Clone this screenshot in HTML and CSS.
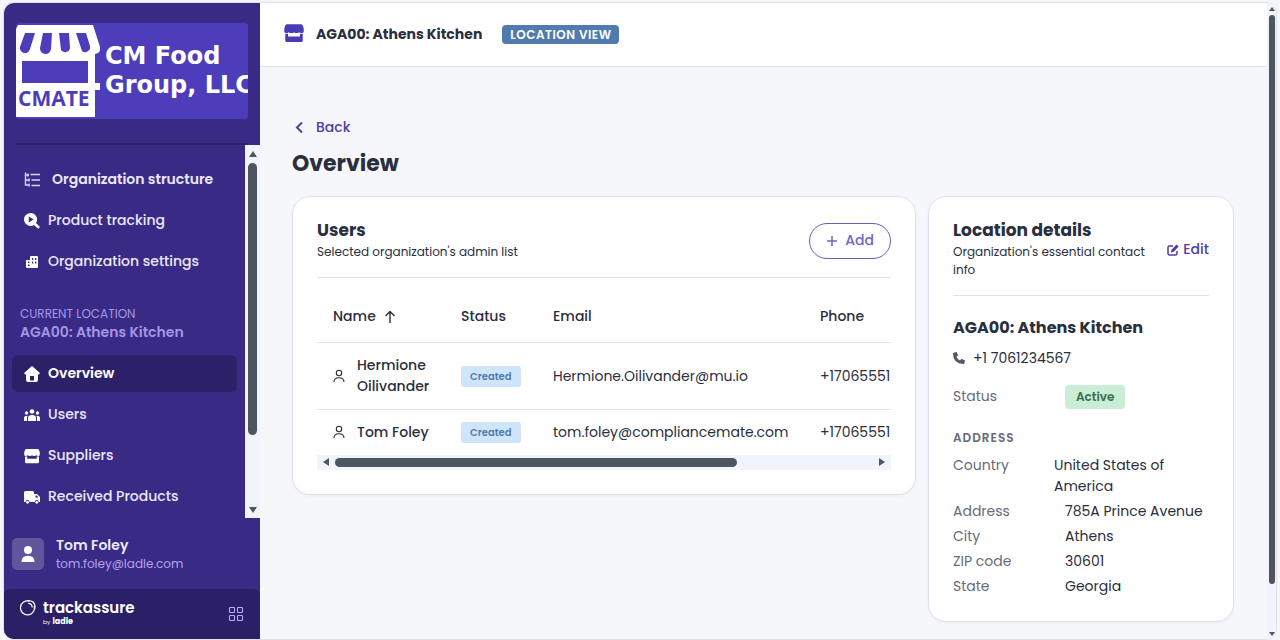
FILE: index.html
```html
<!DOCTYPE html>
<html lang="en">
<head>
<meta charset="utf-8">
<meta name="viewport" content="width=device-width, initial-scale=1">
<title>Overview</title>
<link rel="stylesheet" href="styles.css">
</head>
<body>
<div class="app">
  <aside class="sidebar">
    <div class="brand">
      <svg class="brand-logo" viewBox="0 0 232 96" role="img" aria-label="CM Food Group, LLC">
        <rect width="232" height="96" fill="#4d3dba"/>
        <path fill="#fff" d="M2 2H77L84 24Q85 30 79 31V60H84V67H79V94H0V6Z"/>
        <path fill="#4d3dba" d="M9 10H19L14 26A5 5 0 0 1 4 24ZM27 10H36L35 26A5 5 0 0 1 24 25ZM43 10H53L54 25A5 5 0 0 1 45 27ZM60 10H70L74 23A5 5 0 0 1 66 28ZM6 38H72V60H6Z"/>
        <text class="logo-mark" x="2" y="83">CMATE</text>
        <text class="logo-name" x="89" y="41">CM Food</text>
        <text class="logo-name" x="89" y="70">Group, LLC</text>
      </svg>
    </div>
    <div class="side-scroll">
      <nav class="nav">
        <a class="nav-item wide" href="#"><svg class="ico" viewBox="0 0 16 16" fill="none" stroke="#d8d2fa" stroke-width="1.400"><path d="M1.500 .5V13H5.500M1.500 3H5M1.500 8H5.500M6.500 2.500H16M7.500 8H16M7.500 13.500H16"/><path d="M4 1.500V4.500M5 6.500V9.500M5 11.500V14.500"/></svg>Organization structure</a>
        <a class="nav-item" href="#"><svg class="ico" viewBox="0 0 16 16"><path fill="currentColor" fill-rule="evenodd" d="M6.500 0A6.500 6.500 0 0 1 12 10L16 14L14.200 15.800L10 12A6.500 6.500 0 1 1 6.500 0ZM4.800 3.500V9.500L9.600 6.500Z"/></svg>Product tracking</a>
        <a class="nav-item" href="#"><svg class="ico" viewBox="0 0 16 16"><path fill="currentColor" fill-rule="evenodd" d="M2 6H6V3Q6 2 7 2H13Q14 2 14 3V13Q14 14 13 14H3Q2 14 2 13ZM4 7.500V9H5.500V7.500ZM4 10.500V12H5.500V10.500ZM8 4V6H9.300V4ZM11 4V6H12.300V4ZM8 7.500V9.500H9.300V7.500ZM11 7.500V9.500H12.300V7.500Z"/></svg>Organization settings</a>
        <div class="nav-group">
          <span class="nav-label">CURRENT LOCATION</span>
          <span class="nav-place">AGA00: Athens Kitchen</span>
        </div>
        <a class="nav-item active" href="#" aria-current="page"><svg class="ico" viewBox="0 0 16 16"><path fill="currentColor" fill-rule="evenodd" d="M8 0L16 7L15 8.500H14V14Q14 16 12 16H4Q2 16 2 14V8.500H1L0 7ZM6 10V14.500H10V10Z"/></svg>Overview</a>
        <a class="nav-item" href="#"><svg class="ico" viewBox="0 0 16 16" fill="currentColor"><circle cx="8" cy="4.500" r="2.300"/><circle cx="2.500" cy="6" r="1.700"/><circle cx="13.500" cy="6" r="1.700"/><path d="M4 14V11Q4 8 8 8T12 11V14ZM0 14V11Q0 8.700 3.600 8.700Q2.800 10 3 14ZM16 14V11Q16 8.700 12.400 8.700Q13.200 10 13 14Z"/></svg>Users</a>
        <a class="nav-item" href="#"><svg class="ico" viewBox="0 0 16 16"><use href="#store"/></svg>Suppliers</a>
        <a class="nav-item" href="#"><svg class="ico" viewBox="0 0 16 16"><path fill="currentColor" d="M1.500 2H8.500Q10 2 10 3.500V5H13L16 8V13H14.800A2 2 0 0 0 10.800 13H5.500A2 2 0 0 0 1.500 13H0V3.500Q0 2 1.500 2Z"/><circle cx="3.500" cy="13.300" r="1.400" fill="currentColor"/><circle cx="12.800" cy="13.300" r="1.400" fill="currentColor"/><path d="M11.500 6.500V8.500H14.500L12.800 6.500Z" fill="#392b85"/></svg>Received Products</a>
      </nav>
      <div class="vbar side-bar"><i class="arrow up"></i><i class="thumb"></i><i class="rest"></i><i class="arrow down"></i></div>
    </div>
    <div class="account">
      <span class="avatar"><svg viewBox="0 0 16 16" width="16" height="16" fill="#fff"><circle cx="8" cy="4" r="4"/><path d="M1.500 16Q1.500 9.800 8 9.800T14.500 16Z"/></svg></span>
      <div class="account-text">
        <span class="account-name">Tom Foley</span>
        <span class="account-mail">tom.foley@ladle.com</span>
      </div>
    </div>
    <footer class="side-foot">
      <svg class="ring" viewBox="0 0 16 16" fill="none" stroke="#fff"><path d="M9.500 1.200A7 7 0 1 0 14.200 6M7.500 .7Q14.500 .4 15 6.500Q15.200 8.500 14 10M8.300 3.300Q12.200 3.300 12.200 7.500" stroke-width="1.200"/></svg>
      <div class="product"><span class="product-name">trackassure</span><span class="product-by"><small>by</small><b>ladle</b></span></div>
      <button class="grid-btn" type="button" aria-label="Apps"><svg viewBox="0 0 16 16" width="16" height="16" fill="none" stroke="#b9aef5" stroke-width="1.100"><rect x="1.500" y="1.500" width="5" height="5" rx=".8"/><rect x="9.500" y="1.500" width="5" height="5" rx=".8"/><rect x="1.500" y="9.500" width="5" height="5" rx=".8"/><rect x="9.500" y="9.500" width="5" height="5" rx=".8"/></svg></button>
    </footer>
  </aside>

  <main class="main">
    <header class="topbar">
      <svg class="store" viewBox="0 0 16 16"><g id="store" fill="currentColor"><path d="M2.500 1H13.500Q14.500 1 15 2L15.800 4.500V6.500Q15.800 8 14.300 8Q13 8 12.200 7.300Q11.500 8 10.100 8T8 7.300Q7.300 8 5.900 8T3.800 7.300Q3 8 1.700 8Q.2 8 .2 6.500V4.500L1 2Q1.500 1 2.500 1Z"/><path d="M1 8.600H3.200V10.800H12.800V8.600H15V14Q15 15.200 13.800 15.200H2.200Q1 15.200 1 14Z"/></g></svg>
      <strong class="place">AGA00: Athens Kitchen</strong>
      <span class="view-tag">LOCATION VIEW</span>
    </header>
    <div class="content">
      <a class="back" href="#"><svg viewBox="0 0 16 16" width="16" height="16" fill="none" stroke="currentColor" stroke-width="2"><path d="M10 2.500L5 7.500L10 12.500"/></svg>Back</a>
      <h1 class="page-title">Overview</h1>
      <div class="cards">
        <section class="card">
          <div class="card-head">
            <div><h2 class="card-title">Users</h2><p class="card-sub">Selected organization's admin list</p></div>
            <button class="add-btn" type="button"><svg viewBox="0 0 12 12" width="12" height="12" fill="none" stroke="currentColor" stroke-width="1.500"><path d="M6 1V11M1 6H11"/></svg>Add</button>
          </div>
          <div class="table-wrap">
            <table class="users">
              <colgroup><col class="c-name"><col class="c-status"><col class="c-mail"><col></colgroup>
              <thead><tr><th><span class="sort">Name<svg viewBox="0 0 12 14" width="12" height="14" fill="none" stroke="currentColor" stroke-width="1.400"><path d="M6 13V2M1.500 6L6 1.500L10.500 6"/></svg></span></th><th>Status</th><th>Email</th><th>Phone</th></tr></thead>
              <tbody>
                <tr class="tall"><td><span class="person"><svg viewBox="0 0 12 14" width="12" height="14" fill="none" stroke="currentColor" stroke-width="1.100"><circle cx="6" cy="4" r="2.700"/><path d="M1 13Q1 8.800 6 8.800T11 13"/></svg>Hermione Oilivander</span></td><td><span class="chip">Created</span></td><td>Hermione.Oilivander@mu.io</td><td>+17065551</td></tr>
                <tr><td><span class="person"><svg viewBox="0 0 12 14" width="12" height="14" fill="none" stroke="currentColor" stroke-width="1.100"><circle cx="6" cy="4" r="2.700"/><path d="M1 13Q1 8.800 6 8.800T11 13"/></svg>Tom Foley</span></td><td><span class="chip">Created</span></td><td>tom.foley@compliancemate.com</td><td>+17065551</td></tr>
              </tbody>
            </table>
            <div class="hbar"><i class="arrow left"></i><i class="thumb"></i><i class="rest"></i><i class="arrow right"></i></div>
          </div>
        </section>

        <section class="card">
          <div class="card-head">
            <div><h2 class="card-title">Location details</h2><p class="card-sub">Organization's essential contact info</p></div>
            <button class="edit-btn" type="button"><svg viewBox="0 0 12 12" width="12" height="12" fill="none" stroke="currentColor" stroke-width="1.500"><path d="M6 2H2.500Q1 2 1 3.500V9.500Q1 11 2.500 11H8.500Q10 11 10 9.500V7"/><path d="M4 8.500L4.500 5.700L9.500 .5L11.700 2.500L6.700 7.800Z" fill="currentColor" stroke="none"/></svg>Edit</button>
          </div>
          <h3 class="loc-name">AGA00: Athens Kitchen</h3>
          <p class="loc-phone"><svg viewBox="0 0 12 12" width="12" height="12" fill="#565866"><path d="M.7 .8L3 0Q3.600 -.1 3.900 .5L4.900 3Q5 3.500 4.600 3.900L3.500 4.900Q4.700 7.300 7.100 8.500L8.100 7.300Q8.500 6.900 9.100 7.100L11.500 8.200Q12.100 8.500 11.900 9.100L11.300 11.400Q11.100 12 10.500 12Q0 11.800 0 1.500Q.1 1 .7 .8Z"/></svg>+1 7061234567</p>
          <dl class="facts status"><div class="fact"><dt>Status</dt><dd><span class="active-chip">Active</span></dd></div></dl>
          <h4 class="facts-title">ADDRESS</h4>
          <dl class="facts">
            <div class="fact long"><dt>Country</dt><dd>United States of America</dd></div>
            <div class="fact"><dt>Address</dt><dd>785A Prince Avenue</dd></div>
            <div class="fact"><dt>City</dt><dd>Athens</dd></div>
            <div class="fact"><dt>ZIP code</dt><dd>30601</dd></div>
            <div class="fact"><dt>State</dt><dd>Georgia</dd></div>
          </dl>
        </section>
      </div>
    </div>
  </main>
  <div class="vbar page-bar"><i class="arrow up"></i><i class="thumb"></i><i class="rest"></i><i class="arrow down"></i></div>
</div>
</body>
</html>
```
FILE: styles.css
```css
* { box-sizing: border-box; }
body {
  margin: 0;
  padding: 2px 3px 0;
  height: 100vh;
  background: #f5f6f9;
  color: #2a2e3d;
  font: 14px/21px Poppins, Inter, sans-serif;
}
h1, h2, h3, h4, p, dl, dd { margin: 0; }
a { text-decoration: none; color: inherit; }
button { font: inherit; background: none; border: 0; padding: 0; cursor: pointer; }
svg { flex: none; }

.app { display: flex; height: 100%; border: 1px solid #e0e1e7; border-radius: 11px; overflow: hidden; background: #f5f7fb; }

.sidebar { width: 256px; flex: none; display: flex; flex-direction: column; background: #392b85; color: #ebe8ff; }
.brand { margin: 0 12px; padding: 20px 0 24px; border-bottom: 2px solid #2d2269; }
.brand-logo { display: block; width: 100%; border-radius: 3px; }
.logo-mark { font: bold 21px "Open Sans", sans-serif; fill: #4d3dba; }
.logo-name { font: bold 24px "DejaVu Sans", sans-serif; fill: #fff; }

.side-scroll { flex: 1; min-height: 0; display: flex; }
.nav { flex: 1; overflow: hidden; display: flex; flex-direction: column; gap: 4px; padding: 16px 8px 0; }
.nav-item { flex: none; display: flex; align-items: center; gap: 8px; height: 37px; padding: 0 12px; border-radius: 6px; font-weight: 500; white-space: nowrap; }
.nav-item.wide { gap: 12px; font-weight: 600; }
.nav-item.active { background: #2c2169; color: #fff; font-weight: 600; }
.ico { width: 16px; height: 16px; color: #fff; }
.nav-group { display: flex; flex-direction: column; padding: 20px 8px 10px; color: #a496e4; }
.nav-label { font-size: 12px; line-height: 19px; }
.nav-place { font-weight: 600; line-height: 18px; }

.account { display: flex; align-items: center; gap: 12px; height: 71px; padding: 0 8px; }
.avatar { display: grid; place-items: center; width: 32px; height: 32px; border-radius: 5px; background: #61559d; }
.account-text { display: flex; flex-direction: column; }
.account-name { font-weight: 600; line-height: 20px; }
.account-mail { font-size: 12px; line-height: 18px; color: #b0a2ee; }
.side-foot { display: flex; gap: 7px; height: 50px; padding: 11px 16px; border-radius: 6px 6px 0 0; background: #2b2068; color: #fff; }
.ring { width: 16px; height: 16px; }
.product { display: flex; flex-direction: column; flex: 1; }
.product-name { font-size: 15px; line-height: 16px; font-weight: 600; }
.product-by { display: flex; align-items: center; gap: 2px; font-size: 8px; line-height: 12px; }
.product-by small { font-size: 6px; }
.grid-btn { align-self: center; display: flex; }

.vbar { display: flex; flex-direction: column; align-items: center; background: #f1f4fb; }
.side-bar { width: 15px; padding: 6px 0 5px; gap: 6px; }
.side-bar .thumb { flex: 273; width: 9px; }
.side-bar .rest { flex: 60; }
.page-bar { width: 9px; padding: 4px 0 3px; gap: 4px; }
.page-bar .thumb { flex: 571; width: 6px; }
.page-bar .rest { flex: 40; }
.thumb { border-radius: 5px; background: #4d5562; }
.arrow { border: 0 solid transparent; }
.arrow.up { border-width: 0 4px 6px; border-bottom-color: #4d5562; }
.arrow.down { border-width: 6px 4px 0; border-top-color: #4d5562; }
.arrow.left { border-width: 4px 6px 4px 0; border-right-color: #4d5562; }
.arrow.right { border-width: 4px 0 4px 6px; border-left-color: #4d5562; }
.page-bar .arrow.up { border-width: 0 3px 4px; }
.page-bar .arrow.down { border-width: 4px 3px 0; }
.hbar { display: flex; align-items: center; height: 15px; padding: 0 6px; gap: 6px; background: #f1f4fb; }
.hbar .thumb { flex: 402; height: 9px; }
.hbar .rest { flex: 130; }

.main { flex: 1; min-width: 0; }
.topbar { display: flex; align-items: center; height: 64px; padding: 0 24px; background: #fff; border-bottom: 1px solid #dfe1e7; }
.store { width: 20px; height: 20px; color: #4b3bb5; margin: 0 12px 4px 0; }
.place { font-weight: 700; }
.view-tag { margin-left: 20px; padding: 0 8px; border-radius: 4px; background: #517baf; color: #fff; font-size: 12px; line-height: 19px; font-weight: 600; letter-spacing: 0.5px; }
.content { padding: 48px 33px 16px 32px; }
.back { display: inline-flex; align-items: center; gap: 8px; padding: 2px 0; color: #4d3da8; font-weight: 500; }
.page-title { margin: 7px 0 17px; font-size: 22px; line-height: 30px; font-weight: 700; }
.cards { display: grid; grid-template-columns: minmax(0, 1fr) 306px; gap: 12px; align-items: start; }
.card { padding: 24px; background: #fff; border: 1px solid #dfe1e8; border-radius: 18px; box-shadow: 0 1px 2px #dfe1e866; }
.card-head { display: flex; align-items: center; justify-content: space-between; gap: 16px; padding-bottom: 16px; border-bottom: 1px solid #dfe1e6; }
.card-title { font-size: 17px; line-height: 18px; font-weight: 700; }
.card-sub { margin-top: 4px; font-size: 12px; line-height: 18px; }
.add-btn { display: flex; align-items: center; gap: 7px; height: 36px; padding: 0 16px; border: 1px solid #6a5cb8; border-radius: 18px; color: #7165c5; font-weight: 500; }
.edit-btn { display: flex; align-items: center; gap: 4px; color: #4d3da8; font-weight: 500; }

.table-wrap { padding-top: 14px; }
.users { width: 100%; table-layout: fixed; border-collapse: collapse; }
.c-name { width: 128px; }
.c-status { width: 92px; }
.c-mail { width: 267px; }
.users th, .users td { padding: 0 0 0 16px; text-align: left; white-space: nowrap; }
.users th { height: 51px; font-weight: 500; border-bottom: 1px solid #dfe1e6; }
.users td { height: 45px; }
.users .tall td { height: 67px; border-bottom: 1px solid #dfe1e6; }
.sort { display: flex; align-items: center; gap: 8px; }
.person { display: flex; align-items: center; gap: 12px; font-weight: 500; white-space: normal; }
.chip { display: inline-block; padding: 0 9px; border-radius: 3px; background: #cfe5fb; color: #517baf; font-size: 10px; line-height: 21px; font-weight: 600; vertical-align: middle; }

.loc-name { margin-top: 20px; font-size: 16px; line-height: 24px; font-weight: 700; }
.loc-phone { display: flex; align-items: center; gap: 8px; margin-top: 8px; }
.facts { display: flex; flex-direction: column; gap: 4px; }
.facts.status { margin-top: 16px; }
.fact { display: grid; grid-template-columns: 112px 1fr; align-items: center; }
.fact.long { grid-template-columns: 101px 130px; align-items: start; }
.fact dt { color: #686b78; }
.active-chip { display: inline-block; padding: 0 11px; border-radius: 4px; background: #c9edd5; color: #3b6e4f; font-size: 12px; line-height: 24px; font-weight: 600; vertical-align: middle; }
.facts-title { margin: 19px 0 7px; font-size: 12px; line-height: 20px; font-weight: 600; color: #686b78; letter-spacing: 1px; }
```
